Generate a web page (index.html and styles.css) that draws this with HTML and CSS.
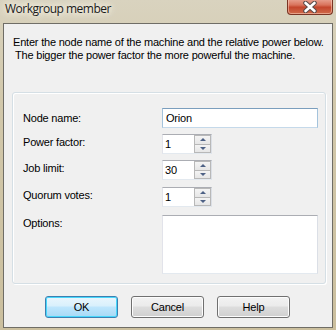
FILE: index.html
```html
<!DOCTYPE html>
<html>
<head>
<meta charset="utf-8">
<link rel="stylesheet" href="styles.css">
</head>
<body>
<div class="window">
  <div class="titlebar">
    <span class="title">Workgroup member</span>
    <div class="close">
      <svg width="16" height="12" viewBox="0 0 16 12">
        <path d="M3.5 2 L12.5 10 M12.5 2 L3.5 10" stroke="#5a4a48" stroke-width="4.6" stroke-linecap="round" fill="none"/>
        <path d="M3.5 2 L12.5 10 M12.5 2 L3.5 10" stroke="#ffffff" stroke-width="2.6" stroke-linecap="round" fill="none"/>
      </svg>
    </div>
  </div>
  <div class="client">
    <div class="intro">
      <div>Enter the node name of the machine and the relative power below.</div>
      <div class="indent">The bigger the power factor the more powerful the machine.</div>
    </div>
    <div class="group">
      <div class="row r1">
        <span class="label">Node name:</span>
        <div class="edit wide">Orion</div>
      </div>
      <div class="row r2">
        <span class="label">Power factor:</span>
        <div class="spin"><div class="spintext">1</div><div class="spinbtns"><div class="sb up"><i></i></div><div class="sb down"><i></i></div></div></div>
      </div>
      <div class="row r3">
        <span class="label">Job limit:</span>
        <div class="spin"><div class="spintext">30</div><div class="spinbtns"><div class="sb up"><i></i></div><div class="sb down"><i></i></div></div></div>
      </div>
      <div class="row r4">
        <span class="label">Quorum votes:</span>
        <div class="spin"><div class="spintext">1</div><div class="spinbtns"><div class="sb up"><i></i></div><div class="sb down"><i></i></div></div></div>
      </div>
      <div class="row r5">
        <span class="label">Options:</span>
        <div class="edit area"></div>
      </div>
    </div>
    <div class="buttons">
      <div class="btn default">OK</div>
      <div class="btn">Cancel</div>
      <div class="btn">Help</div>
    </div>
  </div>
</div>
</body>
</html>
```
FILE: styles.css
```css
html, body {
  margin: 0;
  padding: 0;
}
body {
  width: 336px;
  height: 330px;
  overflow: hidden;
  font-family: "Liberation Sans", Arial, sans-serif;
  font-size: 11px;
  letter-spacing: -0.2px;
  color: #000;
}
.window {
  box-sizing: border-box;
  width: 336px;
  height: 330px;
  padding: 0 3px 2px 3px;
  display: flex;
  flex-direction: column;
  background: linear-gradient(180deg, #d9d3bf 0%, #d2c8ab 30%, #cbbf9e 100%);
}
.titlebar {
  height: 23px;
  flex: none;
  position: relative;
  display: flex;
  align-items: flex-start;
}
.title {
  font-family: "Open Sans", "Noto Sans", sans-serif;
  font-size: 12px;
  letter-spacing: -0.5px;
  color: #1a1a1a;
  margin-left: 2px;
  margin-top: 1px;
  line-height: 16px;
  text-shadow: 0 0 8px #f4f0e4, 0 0 8px #f4f0e4, 0 0 4px #f4f0e4;
}
.close {
  position: absolute;
  right: 0px;
  top: -1px;
  width: 46px;
  height: 16px;
  box-sizing: border-box;
  border: 1px solid #7a3424;
  border-top: none;
  border-radius: 0 0 4px 4px;
  background: linear-gradient(180deg, #e8a493 0%, #d9735c 40%, #c4462d 55%, #cf6a4a 100%);
  box-shadow: inset 0 0 0 1px rgba(255,220,200,0.5);
  display: flex;
  align-items: center;
  justify-content: center;
}
.client {
  flex: 1;
  box-sizing: border-box;
  border: 1px solid #6f6d66;
  background: #f0f0f0;
  display: flex;
  flex-direction: column;
  padding: 0 0 0 8px;
}
.intro {
  margin-top: 12px;
  line-height: 13px;
  padding-left: 1px;
  white-space: nowrap;
}
.intro .indent {
  padding-left: 2px;
}
.group {
  margin-top: 30px;
  width: 314px;
  height: 192px;
  box-sizing: border-box;
  border: 1px solid #d5dfe5;
  border-radius: 3px;
  box-shadow: inset 1px 1px 0 #fff, 1px 1px 0 #fff;
  padding: 15px 0 0 10px;
  flex: none;
}
.row {
  display: flex;
  align-items: flex-start;
}
.label {
  width: 139px;
  line-height: 13px;
  flex: none;
}
.r1 .label { margin-top: 4px; }
.r2 { margin-top: 6px; }
.r2 .label { margin-top: 2px; }
.r3 { margin-top: 6px; }
.r3 .label { margin-top: 2px; }
.r4 { margin-top: 7px; }
.r4 .label { margin-top: 2px; }
.r5 { margin-top: 8px; }
.r5 .label { margin-top: 2px; }
.edit {
  box-sizing: border-box;
  background: #fff;
  border: 1px solid;
  border-color: #abadb3 #dbdfe6 #e3e9ef #e2e3ea;
}
.wide {
  width: 156px;
  height: 20px;
  border-color: #7b9ebd #a4c3dc #c5d9ea #a4c3dc;
  padding: 3px 0 0 3px;
  line-height: 13px;
}
.area {
  width: 156px;
  height: 59px;
}
.spin {
  width: 50px;
  height: 20px;
  box-sizing: border-box;
  display: flex;
  background: #fff;
  border: 1px solid;
  border-color: #abadb3 #dbdfe6 #e3e9ef #e2e3ea;
}
.spintext {
  flex: 1;
  padding: 3px 0 0 2px;
  line-height: 13px;
}
.spinbtns {
  width: 17px;
  display: flex;
  flex-direction: column;
}
.sb {
  flex: 1;
  box-sizing: border-box;
  border: 1px solid #b8b8b8;
  background: linear-gradient(180deg, #f4f4f4 0%, #e6e6e6 100%);
  display: flex;
  align-items: center;
  justify-content: center;
}
.sb.down {
  border-top: none;
}
.sb i {
  width: 0;
  height: 0;
  border-left: 3px solid transparent;
  border-right: 3px solid transparent;
}
.up i { border-bottom: 3px solid #4d6185; }
.down i { border-top: 3px solid #4d6185; }
.buttons {
  margin-top: 12px;
  display: flex;
  gap: 13px;
  padding-left: 33px;
}
.btn {
  box-sizing: border-box;
  width: 73px;
  height: 22px;
  border: 1px solid #707070;
  border-radius: 3px;
  background: linear-gradient(180deg, #f2f2f2 0%, #ebebeb 45%, #dddddd 50%, #cfcfcf 100%);
  box-shadow: inset 0 0 0 1px #fcfcfc;
  display: flex;
  align-items: center;
  justify-content: center;
  line-height: 13px;
}
.btn.default {
  border-color: #3c7fb1;
  background: linear-gradient(180deg, #eaf6fd 0%, #d9f0fc 45%, #bee6fd 50%, #a7d9f5 100%);
  box-shadow: inset 0 0 0 1px #48d7fb;
}
```
